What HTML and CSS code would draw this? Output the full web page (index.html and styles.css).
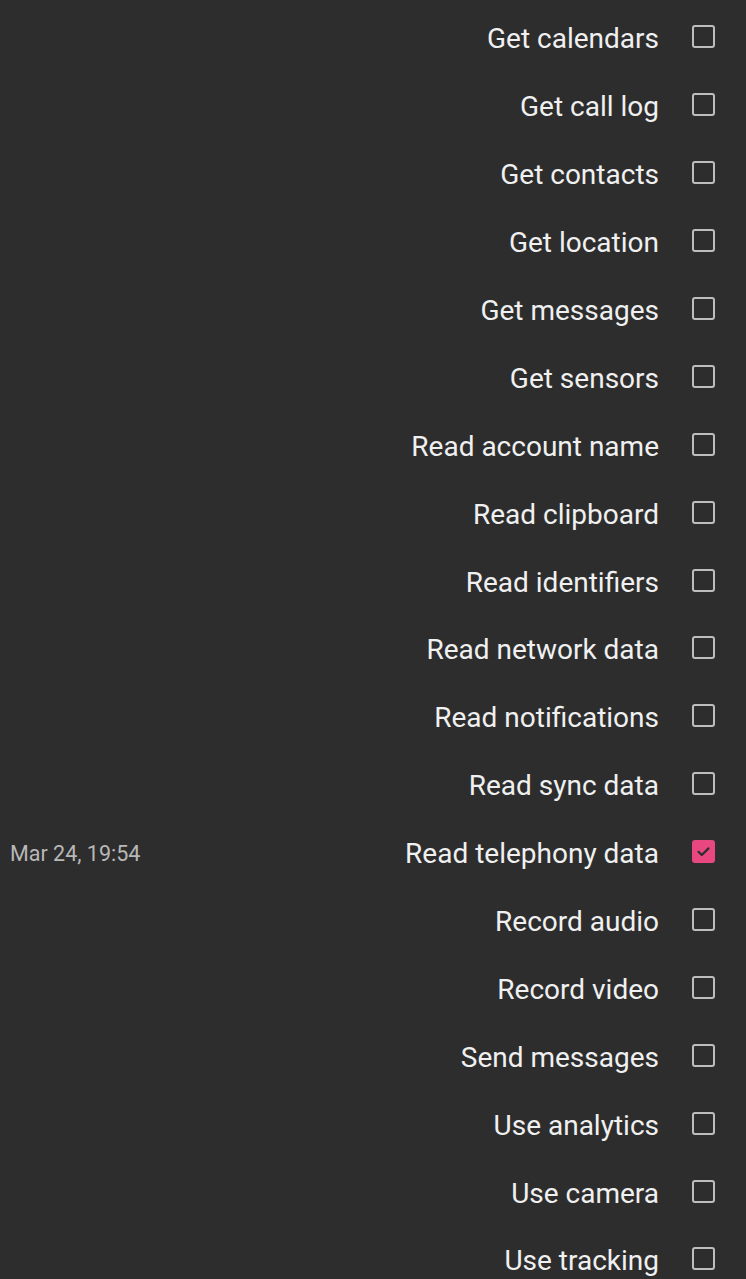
FILE: index.html
```html
<!DOCTYPE html>
<html lang="en">
<head>
  <meta charset="UTF-8">
  <meta name="viewport" content="width=device-width, initial-scale=1.0">
  <title>Permissions</title>
  <link rel="stylesheet" href="styles.css">
</head>
<body>
  <ul class="perm-list">
    <li class="perm-row"><span class="perm-label">Get calendars</span><span class="box"></span></li>
    <li class="perm-row"><span class="perm-label">Get call log</span><span class="box"></span></li>
    <li class="perm-row"><span class="perm-label">Get contacts</span><span class="box"></span></li>
    <li class="perm-row"><span class="perm-label">Get location</span><span class="box"></span></li>
    <li class="perm-row"><span class="perm-label">Get messages</span><span class="box"></span></li>
    <li class="perm-row"><span class="perm-label">Get sensors</span><span class="box"></span></li>
    <li class="perm-row"><span class="perm-label">Read account name</span><span class="box"></span></li>
    <li class="perm-row"><span class="perm-label">Read clipboard</span><span class="box"></span></li>
    <li class="perm-row"><span class="perm-label">Read identifiers</span><span class="box"></span></li>
    <li class="perm-row"><span class="perm-label">Read network data</span><span class="box"></span></li>
    <li class="perm-row"><span class="perm-label">Read notifications</span><span class="box"></span></li>
    <li class="perm-row"><span class="perm-label">Read sync data</span><span class="box"></span></li>
    <li class="perm-row">
      <span class="perm-date">Mar 24, 19:54</span>
      <span class="perm-label">Read telephony data</span>
      <span class="box checked">
        <svg viewBox="0 0 23 23" width="23" height="23"><path d="M6.5 11.8l3.3 3.2 6.7-6.6" fill="none" stroke="#2d2d2d" stroke-width="2.2" stroke-linecap="round" stroke-linejoin="round"/></svg>
      </span>
    </li>
    <li class="perm-row"><span class="perm-label">Record audio</span><span class="box"></span></li>
    <li class="perm-row"><span class="perm-label">Record video</span><span class="box"></span></li>
    <li class="perm-row"><span class="perm-label">Send messages</span><span class="box"></span></li>
    <li class="perm-row"><span class="perm-label">Use analytics</span><span class="box"></span></li>
    <li class="perm-row"><span class="perm-label">Use camera</span><span class="box"></span></li>
    <li class="perm-row"><span class="perm-label">Use tracking</span><span class="box"></span></li>
  </ul>
</body>
</html>
```

FILE: styles.css
```css
body {
  margin: 0;
  background-color: #2d2d2d;
  font-family: Roboto, "Noto Sans", sans-serif;
  color: #f0f0f0;
}

.perm-list {
  list-style: none;
  margin: 0;
  padding: 3px 0 0 0;
}

.perm-row {
  display: flex;
  align-items: center;
  height: 67.9px;
  padding: 0 31px 0 10px;
}

.perm-date {
  font-size: 21.5px;
  color: #b8b8b8;
  padding-top: 3px;
}

.perm-label {
  margin-left: auto;
  font-size: 28px;
  white-space: nowrap;
  padding-top: 4px;
}

.box {
  width: 23px;
  height: 23px;
  margin-left: 33px;
  box-sizing: border-box;
  border: 2.5px solid #bdbdbd;
  border-radius: 3px;
  flex-shrink: 0;
}

.box.checked {
  border: none;
  background-color: #e8487f;
}

.box svg {
  display: block;
}
```
